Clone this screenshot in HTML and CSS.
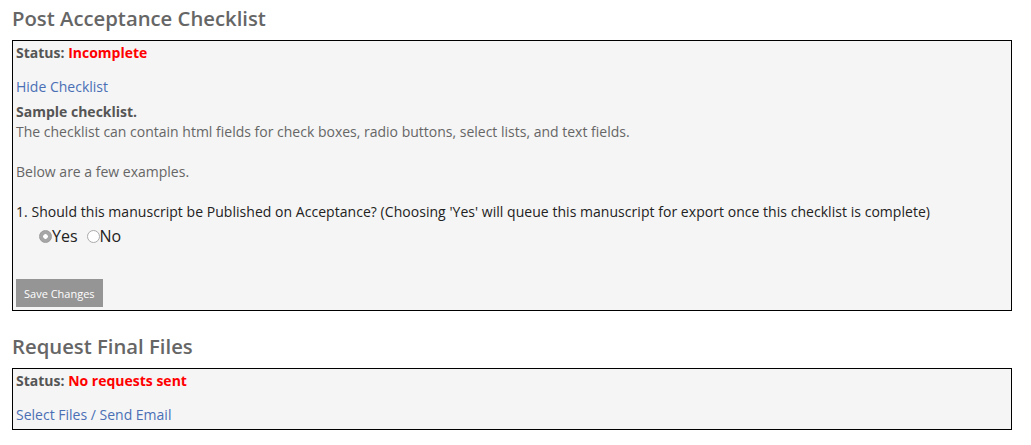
FILE: index.html
```html
<!DOCTYPE html>
<html>
<head>
<meta charset="utf-8">
<link rel="stylesheet" href="styles.css">
</head>
<body>
<div class="page">
  <h2 class="title first">Post Acceptance Checklist</h2>
  <div class="box">
    <p class="status">Status: <span class="bad">Incomplete</span></p>
    <p class="linkline"><a href="#">Hide Checklist</a></p>
    <div class="checklist">
      <p class="strong">Sample checklist.</p>
      <p class="text">The checklist can contain html fields for check boxes, radio buttons, select lists, and text fields.</p>
      <p class="text blank">Below are a few examples.</p>
      <p class="question">1. Should this manuscript be Published on Acceptance? (Choosing 'Yes' will queue this manuscript for export once this checklist is complete)</p>
      <div class="radios">
        <label class="opt"><span class="radio checked"></span>Yes</label>
        <label class="opt"><span class="radio"></span>No</label>
      </div>
    </div>
    <button class="save" type="button">Save Changes</button>
  </div>

  <h2 class="title second">Request Final Files</h2>
  <div class="box box2">
    <p class="status">Status: <span class="bad">No requests sent</span></p>
    <p class="linkline"><a href="#">Select Files / Send Email</a></p>
  </div>
</div>
</body>
</html>
```

FILE: styles.css
```css
html, body {
  margin: 0;
  padding: 0;
  background: #ffffff;
}
body {
  font-family: "Open Sans", "Liberation Sans", sans-serif;
  font-size: 14px;
  line-height: 20px;
  color: #666666;
}
.page {
  width: 1000px;
  margin-left: 12px;
  overflow: hidden;
}
.title {
  font-size: 20.3px;
  line-height: 24px;
  font-weight: 600;
  color: #666666;
  margin: 0 0 10px 0;
}
.title.first {
  margin-top: 6px;
}
.title.second {
  margin-top: 23px;
}
.box {
  border: 1px solid #000000;
  background: #f5f5f5;
  padding: 2px 3px 3px 3px;
}
.box2 {
  padding-bottom: 4px;
}
.box p {
  margin: 0;
}
.status {
  font-weight: 700;
  color: #555555;
}
.bad {
  color: #ff0000;
}
.linkline {
  margin-top: 14px !important;
}
a {
  color: #4a6fb5;
  text-decoration: none;
}
.checklist {
  margin-top: 5px;
}
.strong {
  font-weight: 700;
  color: #555555;
}
.blank {
  margin-top: 20px !important;
}
.question {
  margin-top: 20px !important;
  color: #222222;
  letter-spacing: 0.04px;
}
.radios {
  display: flex;
  align-items: center;
  height: 24px;
  margin-top: 2px;
  padding-left: 23px;
  color: #222222;
  font-size: 16px;
}
.opt {
  display: flex;
  align-items: center;
  margin-right: 9px;
}
.radio {
  box-sizing: border-box;
  width: 13px;
  height: 13px;
  border-radius: 50%;
  border: 1px solid #aaaaaa;
  background: #ffffff;
  margin-right: 0;
  display: inline-block;
}
.radio.checked {
  border-color: #9a9a9a;
  background: radial-gradient(circle, #ffffff 0 2px, #a6a6a6 2.6px);
}
.save {
  display: block;
  margin-top: 31px;
  height: 28px;
  padding: 0 8px;
  border: none;
  background: #959595;
  color: #ffffff;
  font-family: "Open Sans", "Liberation Sans", sans-serif;
  font-size: 11px;
  cursor: pointer;
}
```
